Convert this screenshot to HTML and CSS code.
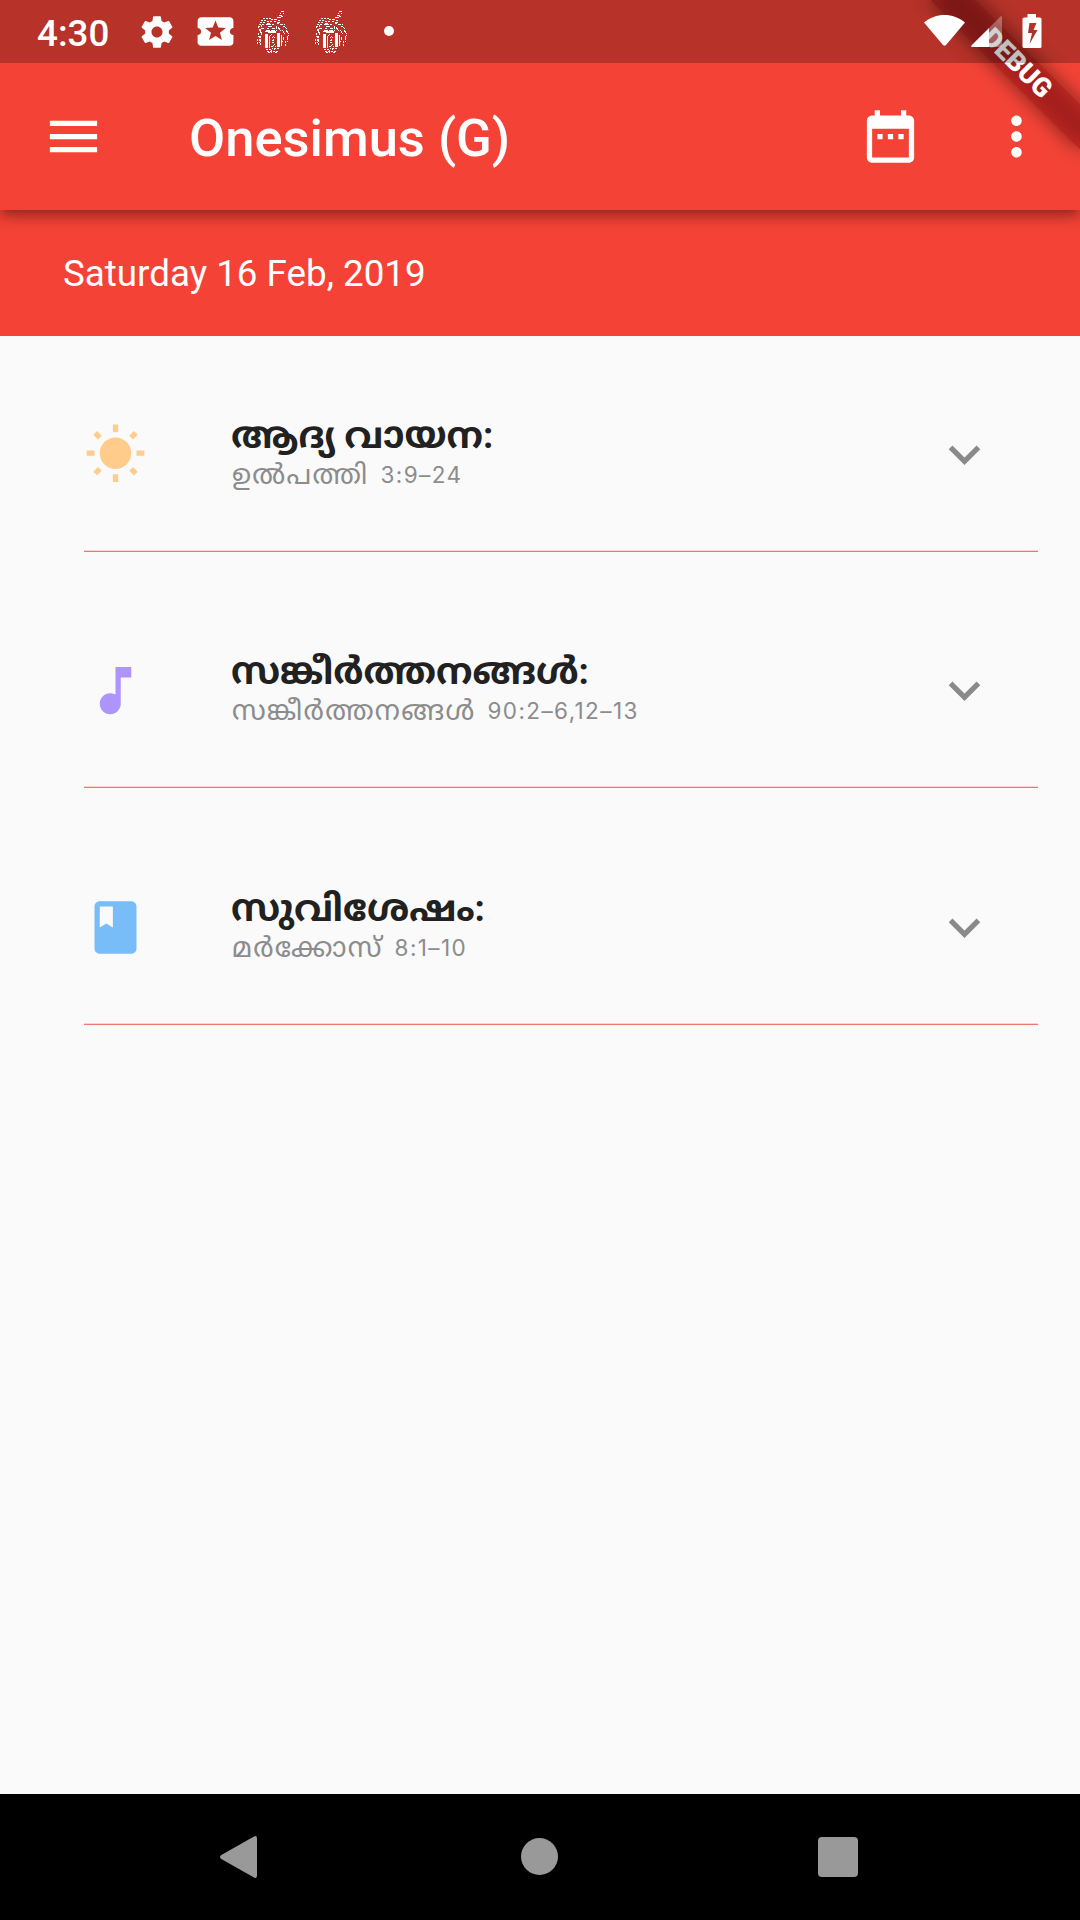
FILE: index.html
```html
<!DOCTYPE html>
<html lang="ml">
<head>
<meta charset="UTF-8">
<title>Onesimus (G)</title>
<link rel="stylesheet" href="styles.css">
</head>
<body>
<div class="screen">
  <div class="status-bar">
    <span class="clock">4:30</span>
    <svg class="st-icon gear" viewBox="0 0 24 24"><path d="M19.43 12.98c.04-.32.07-.64.07-.98s-.03-.66-.07-.98l2.11-1.65c.19-.15.24-.42.12-.64l-2-3.46c-.12-.22-.39-.3-.61-.22l-2.49 1c-.52-.4-1.08-.73-1.69-.98l-.38-2.65C14.46 2.18 14.25 2 14 2h-4c-.25 0-.46.18-.49.42l-.38 2.65c-.61.25-1.17.59-1.69.98l-2.49-1c-.23-.09-.49 0-.61.22l-2 3.46c-.13.22-.07.49.12.64l2.11 1.65c-.04.32-.07.65-.07.98s.03.66.07.98l-2.11 1.65c-.19.15-.24.42-.12.64l2 3.46c.12.22.39.3.61.22l2.49-1c.52.4 1.08.73 1.69.98l.38 2.65c.03.24.24.42.49.42h4c.25 0 .46-.18.49-.42l.38-2.65c.61-.25 1.17-.59 1.69-.98l2.49 1c.23.09.49 0 .61-.22l2-3.46c.12-.22.07-.49-.12-.64l-2.11-1.65zM12 15.5c-1.93 0-3.5-1.57-3.5-3.5s1.57-3.5 3.5-3.5 3.5 1.57 3.5 3.5-1.57 3.5-3.5 3.5z"/></svg>
    <svg class="st-icon ticket" viewBox="0 0 24 24"><path d="M20 12c0-1.1.9-2 2-2V6c0-1.1-.9-2-2-2H4c-1.1 0-1.99.9-1.99 2v4c1.1 0 1.99.9 1.99 2s-.89 2-2 2v4c0 1.1.9 2 2 2h16c1.1 0 2-.9 2-2v-4c-1.1 0-2-.9-2-2zm-4.42 4.8L12 14.5l-3.58 2.3 1.08-4.12-3.29-2.69 4.24-.25L12 5.8l1.54 3.95 4.24.25-3.29 2.69 1.09 4.11z"/></svg>
    <svg class="st-icon crest" viewBox="0 0 38 46">
      <g id="crest" fill="none" stroke="#fff">
        <path d="M27 2.500h3M26 4.500h1M29 4.500h1M25 6.500h3M29 7.500h-2M23 8.500h4M21 10.500h2M24 11.500h2M20 12.500h2M23 13.500h2"/>
        <path stroke-dasharray="2 1" d="M9 9.500h9M7 11.500h6M17 10.500h5M6 13.500h5M13 12.500h5M5 15.500h5M4 17.500h4M8 19.500h3M5 21.500h3"/>
        <path d="M13 14.500h3M12 15.500h5M14 17.500h4M18 15.500h2M13 19.500h2M18 19.500h3M12 21.500h4M17 21.500h4M11 22.500h11M14 23.500h8"/>
        <path stroke-dasharray="3 1 1 1" d="M23 15l3-2M24 18l3 4M26 15l5 1M29 17l5 3M32 21l3 4-3 7M28 21l4 5M30 28l-3 8M33 28l1 6M22 17v5"/>
        <path stroke-dasharray="2 1" d="M4 17l4 8M8 16l-2 8M4 24l2 7M8 24l-3 10M3 30v5M6 31v5M31 32v5"/>
        <path stroke-width="3" d="M12.500 25v14M24.500 24v14"/>
        <path d="M15.500 27v12M27.500 26v11"/>
        <path stroke-dasharray="1 2" d="M16 26l5 2-3 4 3 3-5 4M17 25l3 7-4 5M20 36l-3 6M22 37l-3 6"/>
        <path stroke-dasharray="2 1" d="M12 40.500h5M20 39.500h6M13 42.500h12M14 43.500h4M21 43.500h3"/>
      </g>
    </svg>
    <svg class="st-icon crest second" viewBox="0 0 38 46"><use href="#crest"/></svg>
    <span class="dot"></span>
    <svg class="st-icon wifi" viewBox="0 0 41 31"><path d="M0 7.5C6 2.5 13 0 20.500 0S35 2.5 41 7.500L22 30q-1.500 1.600-3 0z"/></svg>
    <svg class="st-icon signal" viewBox="0 0 31 31"><path d="M31 1.500Q31-1 29 1L18 12v19h11q2 0 2-2z" opacity=".3"/><path d="M18 12v19H1.500q-2.200 0-.8-1.700z"/></svg>
    <svg class="st-icon battery" viewBox="0 0 20 34"><path fill-rule="evenodd" d="M5.500 0h8.500v3.500h4q1.500 0 1.500 1.500v27.500q0 1.500-1.500 1.500H2q-1.500 0-1.500-1.500V5q0-1.500 1.500-1.500h3.500zM7.500 9 6 19h4l-2.500 11 8-14h-4L14.500 9z"/></svg>
  </div>

  <div class="app-bar">
    <svg class="icon menu" viewBox="0 0 24 24"><path d="M3 18h18v-2H3v2zm0-5h18v-2H3v2zm0-7v2h18V6H3z"/></svg>
    <h1>Onesimus (G)</h1>
    <svg class="icon" viewBox="0 0 24 24"><path d="M9 11H7v2h2v-2zm4 0h-2v2h2v-2zm4 0h-2v2h2v-2zm2-7h-1V2h-2v2H8V2H6v2H5c-1.11 0-1.99.9-1.99 2L3 20c0 1.1.89 2 2 2h14c1.1 0 2-.9 2-2V6c0-1.1-.9-2-2-2zm0 16H5V9h14v11z"/></svg>
    <svg class="icon more" viewBox="0 0 24 24"><path d="M12 8c1.1 0 2-.9 2-2s-.9-2-2-2-2 .9-2 2 .9 2 2 2zm0 2c-1.1 0-2 .9-2 2s.9 2 2 2 2-.9 2-2-.9-2-2-2zm0 6c-1.1 0-2 .9-2 2s.9 2 2 2 2-.9 2-2-.9-2-2-2z"/></svg>
  </div>
  <div class="date">Saturday 16 Feb, 2019</div>

  <div class="list">
    <div class="tile">
      <svg class="icon sun" viewBox="0 0 24 24"><path d="M6.76 4.84l-1.8-1.79-1.41 1.41 1.79 1.79 1.42-1.41zM4 10.5H1v2h3v-2zm9-9.95h-2V3.500h2V.55zm7.45 3.91l-1.41-1.41-1.79 1.79 1.41 1.41 1.79-1.79zm-3.21 13.7l1.79 1.8 1.41-1.41-1.8-1.79-1.4 1.4zM20 10.5v2h3v-2h-3zm-8-5c-3.31 0-6 2.69-6 6s2.69 6 6 6 6-2.69 6-6-2.69-6-6-6zm-1 16.95h2V19.5h-2v2.950zm-7.45-3.91l1.41 1.41 1.79-1.8-1.41-1.41-1.79 1.8z"/></svg>
      <div class="text">
        <div class="title">ആദ്യ വായന:</div>
        <div class="sub"><span>ഉൽപത്തി</span><span class="ref">3:9–24</span></div>
      </div>
      <svg class="icon chevron" viewBox="0 0 24 24"><path d="M16.59 8.59L12 13.17 7.41 8.59 6 10l6 6 6-6z"/></svg>
    </div>
    <div class="tile">
      <svg class="icon note" viewBox="0 0 24 24"><path d="M12 3v10.55c-.59-.34-1.27-.55-2-.55-2.21 0-4 1.79-4 4s1.79 4 4 4 4-1.79 4-4V7h4V3h-6z"/></svg>
      <div class="text">
        <div class="title">സങ്കീർത്തനങ്ങൾ:</div>
        <div class="sub"><span>സങ്കീർത്തനങ്ങൾ</span><span class="ref">90:2–6,12–13</span></div>
      </div>
      <svg class="icon chevron" viewBox="0 0 24 24"><path d="M16.59 8.59L12 13.17 7.41 8.59 6 10l6 6 6-6z"/></svg>
    </div>
    <div class="tile">
      <svg class="icon book" viewBox="0 0 24 24"><path d="M18 2H6c-1.1 0-2 .9-2 2v16c0 1.1.9 2 2 2h12c1.1 0 2-.9 2-2V4c0-1.1-.9-2-2-2zM6 4h5v8l-2.500-1.500L6 12V4z"/></svg>
      <div class="text">
        <div class="title">സുവിശേഷം:</div>
        <div class="sub"><span>മർക്കോസ്</span><span class="ref">8:1–10</span></div>
      </div>
      <svg class="icon chevron" viewBox="0 0 24 24"><path d="M16.59 8.59L12 13.17 7.41 8.59 6 10l6 6 6-6z"/></svg>
    </div>
  </div>

  <div class="nav-bar">
    <svg class="back" viewBox="0 0 37 42"><path d="M34 .6Q37-1 37 2.500v37q0 3.500-3 1.900L1.300 23q-2.600-2 0-4z"/></svg>
    <span class="home"></span>
    <span class="recent"></span>
  </div>

  <div class="banner-clip"><div class="banner">DEBUG</div></div>
</div>
</body>
</html>
```
FILE: styles.css
```css
* { box-sizing: border-box; }
body { margin: 0; background: #fafafa; font-family: Roboto, "Noto Sans Malayalam", sans-serif; }
.screen { position: relative; display: flex; flex-direction: column; width: 1080px; height: 1920px;
          overflow: hidden; background: #fafafa; }
.icon { width: 63px; height: 63px; flex: none; fill: #fff; }

/* translucent, lies over the app and the banner */
.status-bar { position: absolute; top: 0; left: 0; right: 0; z-index: 5; height: 63px; display: flex;
              align-items: center; padding: 0 38px 0 37px; background: rgba(0,0,0,.25); color: #fff; }
.st-icon { fill: #fff; flex: none; }
.clock { width: 101px; padding-top: 3px; font-size: 36.75px; font-weight: 500; }
.gear { width: 38px; height: 38px; }
.ticket { width: 43px; height: 43px; margin-left: 18px; }
.crest { width: 38px; height: 46px; margin-left: 17px; shape-rendering: crispEdges; }
.crest.second { margin-left: 20px; }
.dot { width: 10px; height: 10px; border-radius: 50%; background: #fff; margin: 0 auto 2px 34px; }
.wifi { width: 41px; height: 31px; margin-bottom: 3px; }
.signal { width: 31px; height: 31px; margin-left: 6px; }
.battery { width: 20px; height: 34px; margin: 0 0 1px 20px; }

.app-bar { position: relative; z-index: 1; display: flex; align-items: center; height: 210px; flex: none;
           padding: 63px 32px 0 42px; background: #f44336;
           box-shadow: 0 5px 10px -2px rgba(0,0,0,.25), 0 9px 13px rgba(0,0,0,.14), 0 2px 20px rgba(0,0,0,.12); }
h1 { flex: 1; margin: 2px 0 0 84px; font-size: 52.5px; font-weight: 500; color: #fff; line-height: 62px; }
.more { margin-left: 63px; }
.date { height: 126px; flex: none; padding: 1px 0 0 63px; line-height: 126px; font-size: 36.75px; color: #fff;
        background: #f44336; }

.list { flex: 1; padding: 0 42px 0 84px; }
.tile { display: flex; height: 216px; margin-bottom: 20.4px; padding: 86.75px 42px 0 0;
        border-bottom: 1px solid #ee786b; box-shadow: inset 0 -1px 0 #fbd3ce; }
.text { flex: 1; margin: -8px 0 0 84px; white-space: nowrap; }
.title { height: 42px; line-height: 42px; font-size: 36.75px; font-weight: 700; color: #212121; }
.sub { display: flex; height: 36px; line-height: 36px; padding-left: 1px; font-size: 27.5px;
       letter-spacing: 1.3px; color: #8c8c8c; }
.ref { margin-left: 12px; letter-spacing: 1.4px; font-family: Inter, sans-serif; font-size: 22.5px; }
.sun { fill: #ffcc8c; }
.note { fill: #ae94ff; }
.book { fill: #78bdf8; }
.chevron { fill: #8a8a8a; }

.nav-bar { display: flex; align-items: center; height: 126px; flex: none; padding: 0 0 1px 220px; background: #000; }
.back { width: 37px; height: 42px; fill: #999; }
.home { width: 37px; height: 37px; margin-left: 264px; border-radius: 50%; background: #999; }
.recent { width: 40px; height: 40px; margin-left: 260px; border-radius: 4px; background: #999; }

.banner-clip { position: absolute; z-index: 4; top: 0; right: 0; width: 300px; height: 300px; overflow: hidden; }
.banner { position: absolute; top: 73.5px; left: 195px; width: 210px; height: 31.5px;
          transform: rotate(45deg); transform-origin: 105px -73.5px;
          color: #fff; font-size: 26.8px; font-weight: 900; line-height: 31.5px; text-align: center; }
.banner::before, .banner::after { content: ""; position: absolute; inset: 0; z-index: -1; }
.banner::before { background: rgba(0,0,0,.5); filter: blur(10px); }
.banner::after { background: rgba(183,28,28,.63); }
```
